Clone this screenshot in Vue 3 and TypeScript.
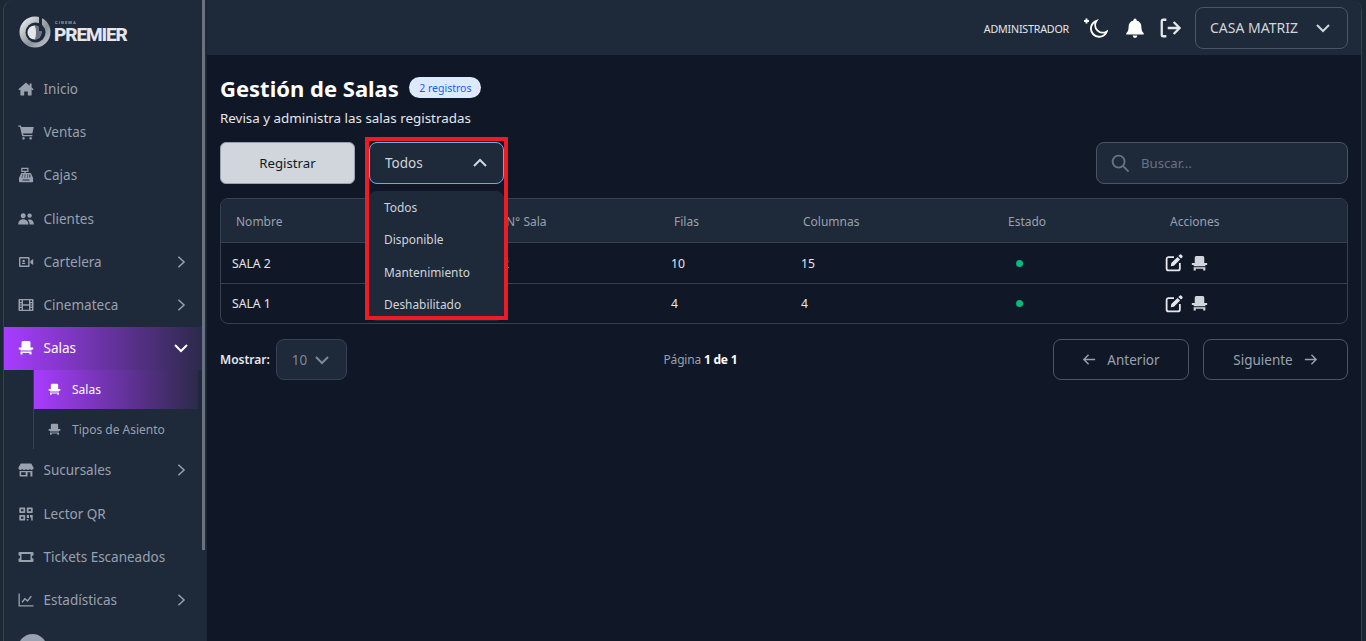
<script setup lang="ts">
interface NavItem {
  label: string;
  icon: string;
  arrow?: 'right' | 'down';
  active?: boolean;
  children?: { label: string; active?: boolean }[];
}

const chair =
  'M5 1h6a1.500 1.500 0 0 1 1.500 1.500v5h-9v-5A1.500 1.500 0 0 1 5 1zM.8 7.500h14.400v2h-1.700v1h-11v-1H.8zM2.500 11.600h11v3h-2V13h-7v1.600h-2z';

const icons: Record<string, string> = {
  home: 'M8 1.600.4 8.300l.9 1 1.100-.9v5.600a.6.6 0 0 0 .6.6h3.200v-4.100h3.600v4.100H13a.6.6 0 0 0 .6-.6V8.400l1.100.9.9-1-2-1.800V2.600h-2v2.100z',
  cart: 'M.2 1.500h2.700l.5 1.500h12.400l-1.500 6.600H5.100l.3 1.400h9v1.300H4.200L2 2.800H.2zM5.500 13a1.300 1.300 0 1 0 .01 0zM12.600 13a1.300 1.300 0 1 0 .01 0z',
  cash: 'M3.200.8h7.300v4.100H7.600v1h4.600a1 1 0 0 1 1 .8l1.900 4.300v3.200a1 1 0 0 1-1 1H2a1 1 0 0 1-1-1v-3.200l1.900-4.300a1 1 0 0 1 1-.8h2.400v-1H3.200zM4.400 2v1.700h4.900V2zM4 7.500v1h1.200v-1zM6.500 7.500v1h1.200v-1zM9 7.500v1h1.200v-1zM3.500 9.600v1h1.200v-1zM6.200 9.600v1h1.200v-1zM8.900 9.600v1h1.200v-1zM11.300 7.500v3.100h1v-3.100zM4.500 12.500v1h7v-1z',
  users: 'M5.200 2.200a2.500 2.500 0 1 0 .01 0zM11.600 2.400a2.200 2.200 0 1 0 .01 0zM.2 13.500c0-3.200 1.900-5.300 5-5.300s5.200 2.100 5.200 5.300zM11.600 13.500h4.300c0-3-1.500-5-4.300-5-.7 0-1.300.1-1.800.4 1.200 1.100 1.800 2.600 1.800 4.600z',
  video: 'M2 3h8.600a1 1 0 0 1 1 1v8a1 1 0 0 1-1 1H2a1 1 0 0 1-1-1V4a1 1 0 0 1 1-1zM2.400 4.400v7.200h7.800V4.400zM4.500 6h2.200v2.200H4.500zM4 9h3.200v1H4zM12.400 7l2.800-2v6l-2.800-2z',
  film: 'M1.500 2h13a1 1 0 0 1 1 1v10a1 1 0 0 1-1 1h-13a1 1 0 0 1-1-1V3a1 1 0 0 1 1-1zM2 3.300V5h1.600V3.300zM12.400 3.300V5H14V3.300zM2 6.200v1.200h1.600V6.200zM12.400 6.200v1.200H14V6.200zM2 8.600v1.200h1.600V8.600zM12.400 8.600v1.200H14V8.600zM2 11v1.700h1.600V11zM12.400 11v1.700H14V11zM5 3.300v3.900h6V3.300zM5 8.800v3.900h6V8.800z',
  chair,
  store: 'M2.700 1.500h10.600l2.300 4.300c0 1.300-.9 2.100-1.900 2.100-.8 0-1.400-.4-1.900-1-.4.600-1 1-1.900 1s-1.500-.4-1.900-1c-.4.600-1 1-1.900 1s-1.500-.4-1.900-1c-.5.600-1.100 1-1.900 1-1 0-1.900-.8-1.900-2.100zM1.600 9h12.800v5.500H1.600zM3.200 10.200v2.800h4.400v-2.800zM9.600 10.200v4.300h2.800v-4.300z',
  qr: 'M2 1.500h4.500a.7.700 0 0 1 .7.7v4.100a.7.700 0 0 1-.7.7H2a.7.700 0 0 1-.7-.7V2.200a.7.700 0 0 1 .7-.7zM3 3.200v2.100h2.500V3.200zM9.500 1.500H14a.7.700 0 0 1 .7.7v4.100a.7.700 0 0 1-.7.7H9.500a.7.700 0 0 1-.7-.7V2.200a.7.700 0 0 1 .7-.7zM10.500 3.200v2.100H13V3.200zM2 9h4.500a.7.700 0 0 1 .7.700v4.100a.7.700 0 0 1-.7.700H2a.7.700 0 0 1-.7-.7V9.700A.7.700 0 0 1 2 9zM3 10.700v2.100h2.500v-2.100zM8.800 9h2.200v3H8.800zM8.800 13h1.500v1.500H8.800zM12 9h2.700v5.500h-1.500v-3H12z',
  ticket: 'M1.500 3h13a1 1 0 0 1 1 1v2.300a1.700 1.700 0 0 0 0 3.400V12a1 1 0 0 1-1 1h-13a1 1 0 0 1-1-1V9.700a1.700 1.700 0 0 0 0-3.400V4a1 1 0 0 1 1-1zM3.500 5v6h9V5z',
  chart: 'M.5 1.500h1.300v11.700h13.700v1.300H.5zM3.600 9.800l3.200-4 2.600 2.200 3.400-4.300 1.100.9-4.300 5.400-2.600-2.200-2.300 2.900z'
};

const nav: NavItem[] = [
  { label: 'Inicio', icon: 'home' },
  { label: 'Ventas', icon: 'cart' },
  { label: 'Cajas', icon: 'cash' },
  { label: 'Clientes', icon: 'users' },
  { label: 'Cartelera', icon: 'video', arrow: 'right' },
  { label: 'Cinemateca', icon: 'film', arrow: 'right' },
  {
    label: 'Salas',
    icon: 'chair',
    arrow: 'down',
    active: true,
    children: [{ label: 'Salas', active: true }, { label: 'Tipos de Asiento' }]
  },
  { label: 'Sucursales', icon: 'store', arrow: 'right' },
  { label: 'Lector QR', icon: 'qr' },
  { label: 'Tickets Escaneados', icon: 'ticket' },
  { label: 'Estadísticas', icon: 'chart', arrow: 'right' }
];

const rows = [
  { nombre: 'SALA 2', sala: '2', filas: 10, columnas: 15 },
  { nombre: 'SALA 1', sala: '1', filas: 4, columnas: 4 }
];

const headers = ['Nombre', 'N° Sala', 'Filas', 'Columnas', 'Estado', 'Acciones'];
const options = ['Todos', 'Disponible', 'Mantenimiento', 'Deshabilitado'];
</script>

<template>
  <div class="shell">
    <aside class="sidebar">
      <div class="side-inner">
        <div class="logo">
          <svg class="logo-mark" viewBox="0 0 32 32">
            <defs>
              <linearGradient id="ring" x1="0" y1="0" x2="1" y2="1">
                <stop offset="0" stop-color="#f9fafb" />
                <stop offset="0.6" stop-color="#8b929c" />
                <stop offset="1" stop-color="#d1d5dc" />
              </linearGradient>
            </defs>
            <circle cx="16" cy="16" r="15.500" fill="url(#ring)" />
            <circle cx="16.500" cy="16.500" r="10" fill="#1e2939" />
            <circle cx="15.500" cy="16.500" r="7" fill="#e5e7eb" />
            <path d="M15.500 9.500a7 7 0 0 1 0 14c2-3 2-11 0-14z" fill="#6a7282" />
            <path d="M20 0l3 1v14h-3z" fill="#1e2939" />
          </svg>
          <div class="logo-text">
            <span class="logo-small">CINEMA</span>
            <span class="logo-big">PREMIER</span>
          </div>
        </div>

        <nav>
          <template v-for="item in nav" :key="item.label">
            <div class="nav-item" :class="{ active: item.active }">
              <svg class="nav-icon" viewBox="0 0 16 16"><path :d="icons[item.icon]" fill-rule="evenodd" /></svg>
              <span class="nav-label">{{ item.label }}</span>
              <svg v-if="item.arrow === 'right'" class="nav-arrow" viewBox="0 0 16 16"><path d="M5 2l6.500 6L5 14" /></svg>
              <svg v-if="item.arrow === 'down'" class="nav-arrow down" viewBox="0 0 16 16"><path d="M2 5l6 6 6-6" /></svg>
            </div>
            <div v-if="item.children" class="sub-list">
              <div v-for="c in item.children" :key="c.label" class="sub-item" :class="{ active: c.active }">
                <svg class="sub-icon" viewBox="0 0 16 16"><path :d="icons.chair" fill-rule="evenodd" /></svg>
                <span>{{ c.label }}</span>
              </div>
            </div>
          </template>
        </nav>
        <div class="avatar"></div>
      </div>
      <div class="scroll-thumb"></div>
    </aside>

    <div class="main">
      <header class="topbar">
        <span class="role">ADMINISTRADOR</span>
        <svg class="top-icon moon" viewBox="0 0 24 24">
          <path d="M12.500 4.800A8.200 8.200 0 1 0 22.800 15.500 7.600 7.600 0 0 1 12.500 4.800z" />
          <path class="plus" d="M2.500 2.500v5M0 5h5" />
        </svg>
        <svg class="top-icon bell" viewBox="0 0 24 24">
          <path d="M12 1.500a1.700 1.700 0 0 0-1.700 1.700v.6C7 4.600 5 7.300 5 10.500c0 4.500-1.200 5.700-2.500 7v1.500h19v-1.500c-1.300-1.300-2.500-2.500-2.500-7 0-3.200-2-5.900-5.300-6.700v-.6A1.700 1.700 0 0 0 12 1.500zM9.500 20.300a2.500 2.500 0 0 0 5 0z" />
        </svg>
        <svg class="top-icon logout" viewBox="0 0 24 24">
          <path d="M8 3H4.500A1.500 1.500 0 0 0 3 4.500v15A1.500 1.500 0 0 0 4.500 21H8M9.500 12H22M16 5.500l6.500 6.500-6.500 6.500" />
        </svg>
        <div class="branch">
          <span>CASA MATRIZ</span>
          <svg class="chev" viewBox="0 0 16 16"><path d="M2 5l6 6 6-6" /></svg>
        </div>
      </header>

      <main class="content">
        <div class="title-row">
          <h1>Gestión de Salas</h1>
          <span class="badge">2 registros</span>
        </div>
        <p class="subtitle">Revisa y administra las salas registradas</p>

        <div class="toolbar">
          <button class="btn-primary">Registrar</button>
          <div class="filter">
            <span>Todos</span>
            <svg class="chev" viewBox="0 0 16 16"><path d="M2 11l6-6 6 6" /></svg>
          </div>
          <div class="search">
            <svg viewBox="0 0 20 20"><circle cx="8" cy="8" r="6.300" /><path d="M12.800 12.800 18.500 18.500" /></svg>
            <span>Buscar...</span>
          </div>
        </div>

        <div class="table">
          <div class="row head">
            <div v-for="h in headers" :key="h" class="th">{{ h }}</div>
          </div>
          <div v-for="r in rows" :key="r.nombre" class="row body">
            <div class="td">{{ r.nombre }}</div>
            <div class="td">{{ r.sala }}</div>
            <div class="td">{{ r.filas }}</div>
            <div class="td">{{ r.columnas }}</div>
            <div class="td"><i class="dot"></i></div>
            <div class="td actions">
              <svg class="edit" viewBox="0 0 20 20">
                <path class="edit-box" d="M10 3.500H4A2.200 2.200 0 0 0 1.800 5.700V16A2.200 2.200 0 0 0 4 18.200h10.300a2.200 2.200 0 0 0 2.200-2.200v-6" />
                <path class="edit-pen" d="M16.200.9a1.500 1.500 0 0 1 2.100 0l.8.8a1.500 1.500 0 0 1 0 2.100l-1.300 1.300-2.900-2.900zM13.900 3.200l2.900 2.900-6.900 6.900-3.500.6.600-3.500z" />
              </svg>
              <svg class="seat" viewBox="0 0 16 16"><path :d="icons.chair" fill-rule="evenodd" /></svg>
            </div>
          </div>
        </div>

        <div class="pager">
          <div class="show">
            <b>Mostrar:</b>
            <div class="size">
              <span>10</span>
              <svg class="chev" viewBox="0 0 16 16"><path d="M2 5l6 6 6-6" /></svg>
            </div>
          </div>
          <div class="page-info">Página <b>1 de 1</b></div>
          <div class="page-btns">
            <button class="btn-page prev">
              <svg viewBox="0 0 16 16"><path d="M14 8H2M7 3 2 8l5 5" /></svg>
              Anterior
            </button>
            <button class="btn-page next">
              Siguiente
              <svg viewBox="0 0 16 16"><path d="M2 8h12M9 3l5 5-5 5" /></svg>
            </button>
          </div>
        </div>

        <!-- open dropdown and the red annotation frame lie over the table -->
        <div class="menu">
          <div v-for="o in options" :key="o" class="menu-item">{{ o }}</div>
        </div>
        <div class="mark"></div>
      </main>
    </div>
  </div>
</template>

<style>
html,
body {
  margin: 0;
  height: 100%;
  overflow: hidden;
  background: #1e2939;
}
</style>

<style scoped>
.shell {
  display: flex;
  height: 641px;
  box-sizing: border-box;
  padding: 0 4px 0 3px;
  font-family: 'Noto Sans', 'Open Sans', sans-serif;
  background: #1c2833;
}

/* sidebar */
.sidebar {
  position: relative;
  width: 203px;
  flex-shrink: 0;
  box-sizing: border-box;
  padding-right: 4px;
  background: #1e2939;
  border-left: 1px solid #364153;
  border-top-left-radius: 10px;
  overflow: hidden;
}

.scroll-thumb {
  position: absolute;
  top: 0;
  left: 198px;
  width: 3px;
  height: 550px;
  background: #6a7282;
}

.logo {
  display: flex;
  align-items: center;
  height: 67.500px;
  padding: 0 0 3px 15px;
  box-sizing: border-box;
}

.logo-mark {
  width: 32px;
  height: 32px;
  flex-shrink: 0;
}

.logo-text {
  display: flex;
  flex-direction: column;
  margin-left: 3px;
  color: #e5e7eb;
  font-family: Roboto, sans-serif;
}

.logo-small {
  font-size: 4px;
  line-height: 4px;
  font-weight: 700;
  letter-spacing: 1.100px;
  color: #99a1af;
  margin-left: 1px;
  margin-bottom: 1px;
}

.logo-big {
  font-size: 19px;
  line-height: 17px;
  font-weight: 800;
  letter-spacing: -1.100px;
}

.nav-item {
  display: flex;
  align-items: center;
  height: 43.200px;
  padding-left: 13.500px;
  color: #99a1af;
  font-size: 13.500px;
}

.nav-item.active {
  color: #fff;
  background: linear-gradient(to right, #a83cff, #2c2a4a);
}

.nav-icon {
  width: 16px;
  height: 16px;
  fill: currentColor;
  flex-shrink: 0;
}

.nav-label {
  margin-left: 10px;
  flex: 1;
}

.nav-arrow {
  width: 14px;
  height: 14px;
  margin-right: 14px;
  fill: none;
  stroke: currentColor;
  stroke-width: 1.700;
}

.nav-arrow.down {
  width: 16px;
  height: 16px;
  margin-right: 13px;
  stroke-width: 2;
}

.sub-list {
  margin-left: 29px;
  border-left: 1px solid #364153;
}

.sub-item {
  display: flex;
  align-items: center;
  height: 39.500px;
  padding-left: 14px;
  margin-right: 4px;
  color: #99a1af;
  font-size: 12px;
}

.sub-item.active {
  color: #fff;
  background: linear-gradient(to right, #a83cff, #2c2a4a);
}

.sub-icon {
  width: 13px;
  height: 13px;
  margin-right: 11px;
  fill: currentColor;
}

.avatar {
  width: 29px;
  height: 29px;
  margin: 12px 0 0 14px;
  border-radius: 50%;
  background: #99a1af;
}

/* main column */
.main {
  flex: 1;
  display: flex;
  flex-direction: column;
  margin-left: 1px;
  background: #101828;
  border-right: 1px solid #364153;
  border-top-right-radius: 10px;
  overflow: hidden;
  min-width: 0;
}

.topbar {
  display: flex;
  align-items: center;
  height: 55px;
  flex-shrink: 0;
  padding-right: 13px;
  justify-content: flex-end;
  background: #1e2939;
  color: #e5e7eb;
}

.role {
  font-size: 10.700px;
  letter-spacing: -0.200px;
  margin-right: 15px;
  padding-top: 2px;
}

.top-icon {
  flex-shrink: 0;
}

.moon {
  width: 24px;
  height: 24px;
  fill: none;
  stroke: #fff;
  stroke-width: 1.900;
  margin-right: 16px;
}

.bell {
  width: 22px;
  height: 22px;
  fill: #fff;
  margin-right: 13px;
}

.logout {
  width: 22px;
  height: 22px;
  fill: none;
  stroke: #e5e7eb;
  stroke-width: 2.500;
  margin-right: 14px;
}

.branch {
  display: flex;
  align-items: center;
  justify-content: space-between;
  box-sizing: border-box;
  width: 153px;
  height: 42px;
  padding: 0 16px 0 14px;
  border: 1px solid #4a5565;
  border-radius: 8px;
  font-size: 14px;
  color: #d1d5dc;
}

.chev {
  width: 16px;
  height: 16px;
  fill: none;
  stroke: currentColor;
  stroke-width: 2;
}

.content {
  position: relative;
  flex: 1;
  padding: 20px 13px 0 13px;
  color: #fff;
}

.title-row {
  display: flex;
  align-items: center;
  gap: 10.500px;
  height: 26px;
}

h1 {
  margin: 0;
  font-size: 22px;
  line-height: 26px;
  font-weight: 700;
}

.badge {
  display: flex;
  align-items: center;
  justify-content: center;
  width: 72px;
  height: 21px;
  margin-top: -1px;
  border-radius: 11px;
  background: #dbeafe;
  color: #155dfc;
  font-size: 10.500px;
}

.subtitle {
  margin: 8px 0 0;
  font-size: 13.400px;
  line-height: 18px;
  color: #e5e7eb;
}

.toolbar {
  display: flex;
  align-items: center;
  margin-top: 15px;
}

.btn-primary {
  width: 135px;
  height: 42px;
  border: 1px solid #99a1af;
  border-radius: 6px;
  background: #d1d5dc;
  color: #101828;
  font: inherit;
  font-size: 13.200px;
}

.filter {
  display: flex;
  align-items: center;
  justify-content: space-between;
  box-sizing: border-box;
  width: 135px;
  height: 42px;
  margin-left: 14px;
  padding: 0 15px 0 15px;
  border: 1px solid #6fa8f0;
  border-radius: 8px;
  background: #1e2939;
  color: #d1d5dc;
  font-size: 13.500px;
}

.search {
  display: flex;
  align-items: center;
  box-sizing: border-box;
  width: 252px;
  height: 42px;
  margin-left: auto;
  padding-left: 14px;
  border: 1px solid #4a5565;
  border-radius: 8px;
  background: #1e2939;
  color: #6a7282;
  font-size: 13.200px;
}

.search svg {
  width: 19px;
  height: 19px;
  margin-right: 11px;
  fill: none;
  stroke: #6a7282;
  stroke-width: 2;
}

.table {
  margin-top: 14px;
  border: 1px solid #364153;
  border-radius: 8px;
  overflow: hidden;
}

.row {
  display: grid;
  grid-template-columns: 270px 168px 129px 205px 162px 1fr;
  align-items: center;
}

.row.head {
  height: 43px;
  padding-top: 1px;
  box-sizing: border-box;
  background: #1e2939;
}

.row.body {
  height: 40px;
  border-top: 1px solid #364153;
}

.row.body:last-child {
  height: 39px;
}

.th {
  padding-left: 15px;
  font-size: 12px;
  color: #99a1af;
}

.td {
  padding-left: 11px;
  font-size: 12.200px;
  color: #e5e7eb;
}

.td:nth-child(3) {
  padding-left: 12px;
}

.td:nth-child(4) {
  padding-left: 13px;
}

.dot {
  display: block;
  width: 7px;
  height: 7px;
  margin-left: 12px;
  border-radius: 50%;
  background: #00bc7d;
}

.actions {
  display: flex;
  align-items: center;
  gap: 8px;
  padding-left: 10px;
}

.edit {
  width: 18px;
  height: 18px;
  fill: none;
}

.edit-box {
  stroke: #e5e7eb;
  stroke-width: 2;
}

.edit-pen {
  fill: #e5e7eb;
}

.seat {
  width: 17px;
  height: 17px;
  fill: #d1d5dc;
}

.pager {
  display: flex;
  align-items: center;
  justify-content: space-between;
  margin-top: 15px;
}

.show {
  display: flex;
  align-items: center;
  gap: 6px;
  width: 128px;
}

.show b {
  font-size: 12px;
  font-weight: 600;
  color: #e5e7eb;
}

.size {
  display: flex;
  align-items: center;
  justify-content: space-between;
  box-sizing: border-box;
  width: 71px;
  height: 41px;
  flex-shrink: 0;
  padding: 0 16px 0 15px;
  border: 1px solid #364153;
  border-radius: 8px;
  background: #1e2939;
  color: #7f8896;
  font-size: 13.500px;
}

.page-info {
  font-size: 12px;
  color: #99a1af;
  letter-spacing: -0.200px;
}

.page-info b {
  color: #fff;
  font-weight: 700;
}

.page-btns {
  display: flex;
  gap: 14px;
}

.btn-page {
  display: flex;
  align-items: center;
  justify-content: center;
  gap: 10px;
  box-sizing: border-box;
  height: 41px;
  border: 1px solid #4a5565;
  border-radius: 8px;
  background: transparent;
  color: #99a1af;
  font: inherit;
  font-size: 13.500px;
}

.btn-page svg {
  width: 15px;
  height: 15px;
  fill: none;
  stroke: currentColor;
  stroke-width: 1.500;
}

.prev {
  width: 136px;
}

.next {
  width: 145px;
}

.menu {
  position: absolute;
  top: 136px;
  left: 162px;
  width: 135px;
  height: 130px;
  border-radius: 8px;
  background: #1e2939;
}

.menu-item {
  height: 32.300px;
  line-height: 32.300px;
  padding-left: 15px;
  font-size: 11.900px;
  color: #d1d5dc;
}

.mark {
  position: absolute;
  top: 82px;
  left: 158px;
  width: 143px;
  height: 183px;
  box-sizing: border-box;
  border: 4px solid #ed1c24;
}
</style>
